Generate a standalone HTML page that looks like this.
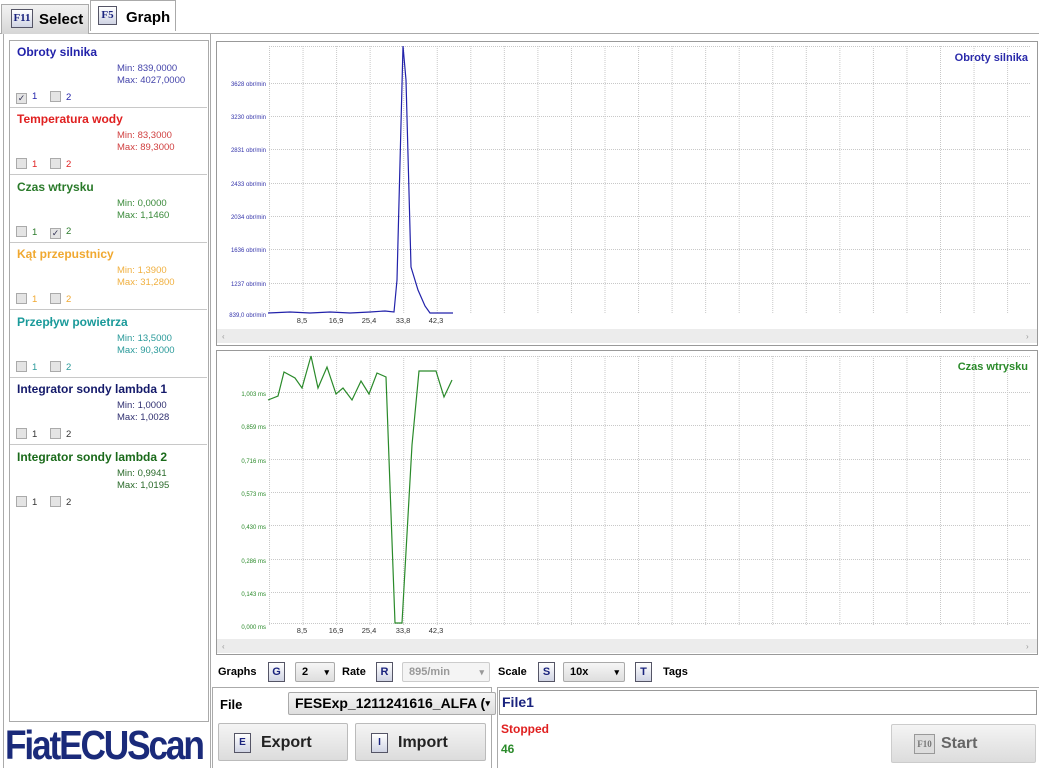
<!DOCTYPE html>
<html><head><meta charset="utf-8"><style>
*{margin:0;padding:0;box-sizing:border-box}
body{width:1039px;height:768px;background:#fff;font-family:"Liberation Sans",Arial,sans-serif;position:relative;overflow:hidden}
.a{position:absolute}
.key{position:absolute;border:1px solid #556;background:linear-gradient(#fff,#d0d4e4);color:#1a237e;font-weight:bold;font-size:10px;text-align:center}
.tab{position:absolute;top:3px;height:30px;font-weight:bold;font-size:15px}
.item{position:absolute;left:10px;width:197px;height:67px;border-bottom:1px solid #c8c8c8}
.item .t{position:absolute;left:7px;top:4px;font-size:12px;font-weight:bold}
.item .mm{position:absolute;left:107px;top:22px;font-size:9.5px;line-height:11.5px}
.item .cb{position:absolute;top:50px;font-size:9.5px}
.item .cb i{display:inline-block;width:11px;height:11px;border:1px solid #aaa;background:#e4e4e4;vertical-align:-2px;margin-right:5px;font-style:normal;font-size:9px;line-height:9px;color:#335;text-align:center}
.btn{position:absolute;border:1px solid #bbb;border-radius:2px;background:linear-gradient(#f4f4f4,#dcdcdc);font-weight:bold;font-size:16px;color:#222}
.sel{position:absolute;border:1px solid #aaa;border-radius:2px;background:linear-gradient(#f6f6f6,#dedede);font-weight:bold;font-size:11px;height:20px;line-height:18px;padding-left:6px}
.sel:after{content:"▾";position:absolute;right:5px;font-size:9px}
.lb{font-weight:bold;font-size:11px;position:absolute}
</style></head><body>
<!-- tabs -->
<div class="a" style="left:0;top:33px;width:1039px;border-top:1px solid #aaa"></div>
<div class="tab" style="left:1px;width:88px;background:linear-gradient(#f2f2f2,#d6d6d6);border:1px solid #aaa;border-bottom:none;top:4px">
 <div class="key" style="left:9px;top:4px;width:22px;height:19px;line-height:17px;font-family:'Liberation Serif',serif;font-size:11px">F11</div>
 <span class="a" style="left:37px;top:6px">Select</span></div>
<div class="tab" style="left:90px;width:86px;height:31px;background:#fff;border:1px solid #aaa;border-bottom:none;top:0">
 <div class="key" style="left:7px;top:5px;width:19px;height:19px;line-height:17px;font-family:'Liberation Serif',serif;font-size:11px">F5</div>
 <span class="a" style="left:35px;top:8px">Graph</span></div>

<!-- left panel -->
<div class="a" style="left:3px;top:34px;width:208px;height:734px;border-left:1px solid #aaa;border-right:1px solid #aaa"></div>
<div class="a" style="left:9px;top:40px;width:200px;height:682px;border:1px solid #aaa"></div>
<div class="item" style="top:41px;color:#2222aa"><div class="t">Obroty silnika</div><div class="mm" style="color:#4444aa">Min: 839,0000<br>Max: 4027,0000</div><div class="cb" style="left:6px"><i>✓</i>1</div><div class="cb" style="left:40px"><i></i>2</div></div>
<div class="item" style="top:108px;color:#e02020"><div class="t">Temperatura wody</div><div class="mm" style="color:#d04040">Min: 83,3000<br>Max: 89,3000</div><div class="cb" style="left:6px"><i></i>1</div><div class="cb" style="left:40px"><i></i>2</div></div>
<div class="item" style="top:176px;color:#2a7a2a"><div class="t">Czas wtrysku</div><div class="mm" style="color:#3a8a3a">Min: 0,0000<br>Max: 1,1460</div><div class="cb" style="left:6px"><i></i>1</div><div class="cb" style="left:40px"><i>✓</i>2</div></div>
<div class="item" style="top:243px;color:#f0a830"><div class="t">Kąt przepustnicy</div><div class="mm" style="color:#f0b040">Min: 1,3900<br>Max: 31,2800</div><div class="cb" style="left:6px"><i></i>1</div><div class="cb" style="left:40px"><i></i>2</div></div>
<div class="item" style="top:311px;color:#1a9a9a"><div class="t">Przepływ powietrza</div><div class="mm" style="color:#2a9a9a">Min: 13,5000<br>Max: 90,3000</div><div class="cb" style="left:6px;color:#2a9a9a"><i></i>1</div><div class="cb" style="left:40px;color:#2a9a9a"><i></i>2</div></div>
<div class="item" style="top:378px;color:#141a6a"><div class="t">Integrator sondy lambda 1</div><div class="mm" style="color:#303070">Min: 1,0000<br>Max: 1,0028</div><div class="cb" style="left:6px;color:#333"><i></i>1</div><div class="cb" style="left:40px;color:#333"><i></i>2</div></div>
<div class="item" style="top:446px;color:#1a6a1a;border-bottom:none"><div class="t">Integrator sondy lambda 2</div><div class="mm" style="color:#2a6a2a">Min: 0,9941<br>Max: 1,0195</div><div class="cb" style="left:6px;color:#333"><i></i>1</div><div class="cb" style="left:40px;color:#333"><i></i>2</div></div>
<div class="a" style="left:5px;top:721px;font-size:41px;font-weight:bold;color:#1a2a7a;letter-spacing:-2.5px;transform:scaleX(0.86);transform-origin:left;line-height:48px;white-space:nowrap">FiatECUScan</div>

<!-- charts -->
<svg class="a" style="left:0;top:0" width="1039" height="660">
<defs>
<pattern id="gv" x="269" y="0" width="33.55" height="700" patternUnits="userSpaceOnUse"><line x1="0.5" y1="0" x2="0.5" y2="700" stroke="#c8c8c8" stroke-dasharray="1,1"/></pattern>
</defs>
<rect x="216.5" y="41.5" width="821" height="304" fill="#fff" stroke="#999"/>
<rect x="269" y="46" width="762" height="268" fill="url(#gv)"/>
<g stroke="#c8c8c8" stroke-dasharray="1,1">
<line x1="269" x2="1031" y1="46.5" y2="46.5"/><line x1="269" x2="1031" y1="83.5" y2="83.5"/><line x1="269" x2="1031" y1="116.5" y2="116.5"/><line x1="269" x2="1031" y1="149.5" y2="149.5"/><line x1="269" x2="1031" y1="183.5" y2="183.5"/><line x1="269" x2="1031" y1="216.5" y2="216.5"/><line x1="269" x2="1031" y1="249.5" y2="249.5"/><line x1="269" x2="1031" y1="283.5" y2="283.5"/>
</g>
<rect x="217" y="329" width="820" height="14" fill="#ececec"/>
<text x="222" y="339" font-size="8" fill="#999">‹</text><text x="1026" y="339" font-size="8" fill="#999">›</text>
<g font-size="6" fill="#3333aa" text-anchor="end" font-family="Liberation Sans">
<text x="266" y="86">3628 obr/min</text><text x="266" y="119">3230 obr/min</text><text x="266" y="152">2831 obr/min</text><text x="266" y="186">2433 obr/min</text><text x="266" y="219">2034 obr/min</text><text x="266" y="252">1636 obr/min</text><text x="266" y="286">1237 obr/min</text><text x="266" y="317">839,0 obr/min</text>
</g>
<g font-size="7.5" fill="#333" text-anchor="middle" font-family="Liberation Sans">
<text x="302" y="323">8,5</text><text x="336" y="323">16,9</text><text x="369" y="323">25,4</text><text x="403" y="323">33,8</text><text x="436" y="323">42,3</text>
</g>
<text x="1028" y="61" font-size="11" font-weight="bold" fill="#2a2aaa" text-anchor="end" font-family="Liberation Sans">Obroty silnika</text>
<polyline fill="none" stroke="#2222aa" stroke-width="1.2" points="268,313 290,312 310,313 330,312 350,313 370,312 385,311 394,312 397,280 403,46 406,80 411,267 418,290 425,306 430,313 453,313"/>

<rect x="216.5" y="350.5" width="821" height="304" fill="#fff" stroke="#999"/>
<rect x="269" y="355" width="762" height="271" fill="url(#gv)"/>
<g stroke="#c8c8c8" stroke-dasharray="1,1">
<line x1="269" x2="1031" y1="356.5" y2="356.5"/><line x1="269" x2="1031" y1="392.5" y2="392.5"/><line x1="269" x2="1031" y1="425.5" y2="425.5"/><line x1="269" x2="1031" y1="459.5" y2="459.5"/><line x1="269" x2="1031" y1="492.5" y2="492.5"/><line x1="269" x2="1031" y1="525.5" y2="525.5"/><line x1="269" x2="1031" y1="559.5" y2="559.5"/><line x1="269" x2="1031" y1="592.5" y2="592.5"/><line x1="269" x2="1031" y1="623.5" y2="623.5"/>
</g>
<rect x="217" y="639" width="820" height="14" fill="#ececec"/>
<text x="222" y="649" font-size="8" fill="#999">‹</text><text x="1026" y="649" font-size="8" fill="#999">›</text>
<g font-size="6" fill="#2a8a2a" text-anchor="end" font-family="Liberation Sans">
<text x="266" y="396">1,003 ms</text><text x="266" y="429">0,859 ms</text><text x="266" y="463">0,716 ms</text><text x="266" y="496">0,573 ms</text><text x="266" y="529">0,430 ms</text><text x="266" y="563">0,286 ms</text><text x="266" y="596">0,143 ms</text><text x="266" y="629">0,000 ms</text>
</g>
<g font-size="7.5" fill="#333" text-anchor="middle" font-family="Liberation Sans">
<text x="302" y="633">8,5</text><text x="336" y="633">16,9</text><text x="369" y="633">25,4</text><text x="403" y="633">33,8</text><text x="436" y="633">42,3</text>
</g>
<text x="1028" y="370" font-size="11" font-weight="bold" fill="#2a8a2a" text-anchor="end" font-family="Liberation Sans">Czas wtrysku</text>
<polyline fill="none" stroke="#2a8a2a" stroke-width="1.2" points="268,400 278,396 284,372 295,378 302,388 311,356 318,388 327,367 336,394 343,388 352,400 361,381 369,394 377,373 386,377 395,623 402,623 412,445 419,371 436,371 444,397 452,380"/>
</svg>

<!-- controls row -->
<span class="lb" style="left:218px;top:666px">Graphs</span>
<div class="key" style="left:268px;top:662px;width:17px;height:20px;line-height:18px;font-size:11px">G</div>
<div class="sel" style="left:295px;top:662px;width:40px">2</div>
<span class="lb" style="left:342px;top:666px">Rate</span>
<div class="key" style="left:376px;top:662px;width:17px;height:20px;line-height:18px;font-size:11px">R</div>
<div class="sel" style="left:402px;top:662px;width:88px;color:#999;background:#f4f4f4;border-color:#ccc">895/min</div>
<span class="lb" style="left:498px;top:666px">Scale</span>
<div class="key" style="left:538px;top:662px;width:17px;height:20px;line-height:18px;font-size:11px">S</div>
<div class="sel" style="left:563px;top:662px;width:62px">10x</div>
<div class="key" style="left:635px;top:662px;width:17px;height:20px;line-height:18px;font-size:11px">T</div>
<span class="lb" style="left:663px;top:666px">Tags</span>

<!-- file panel -->
<div class="a" style="left:212px;top:687px;width:280px;height:81px;border:1px solid #aaa;border-bottom:none"></div>
<span class="a" style="left:220px;top:697px;font-weight:bold;font-size:13px">File</span>
<div class="sel" style="left:288px;top:692px;height:23px;line-height:21px;font-size:14px;width:208px;overflow:hidden;white-space:nowrap">FESExp_1211241616_ALFA (</div>
<div class="btn" style="left:218px;top:723px;width:130px;height:38px"><div class="key" style="left:15px;top:9px;width:17px;height:20px;line-height:18px;font-size:10px">E</div><span class="a" style="left:42px;top:10px">Export</span></div>
<div class="btn" style="left:355px;top:723px;width:131px;height:38px"><div class="key" style="left:15px;top:9px;width:17px;height:20px;line-height:18px;font-size:10px">I</div><span class="a" style="left:42px;top:10px">Import</span></div>

<!-- status panel -->
<div class="a" style="left:497px;top:687px;width:542px;height:81px;border:1px solid #aaa;border-bottom:none;border-right:none"></div>
<div class="a" style="left:499px;top:690px;width:538px;height:25px;border:1px solid #999;font-weight:bold;font-size:14px;color:#1a237e;padding:3px 2px">File1</div>
<span class="a" style="left:501px;top:722px;font-weight:bold;font-size:12px;color:#e02020">Stopped</span>
<span class="a" style="left:501px;top:742px;font-weight:bold;font-size:12px;color:#2a8a2a">46</span>
<div class="btn" style="left:891px;top:724px;width:145px;height:39px;color:#666;border-color:#ccc"><div class="key" style="left:22px;top:9px;width:21px;height:20px;line-height:18px;font-size:9px;color:#777;border-color:#999;background:#ddd;font-family:'Liberation Serif',serif">F10</div><span class="a" style="left:49px;top:10px">Start</span></div>
</body></html>
